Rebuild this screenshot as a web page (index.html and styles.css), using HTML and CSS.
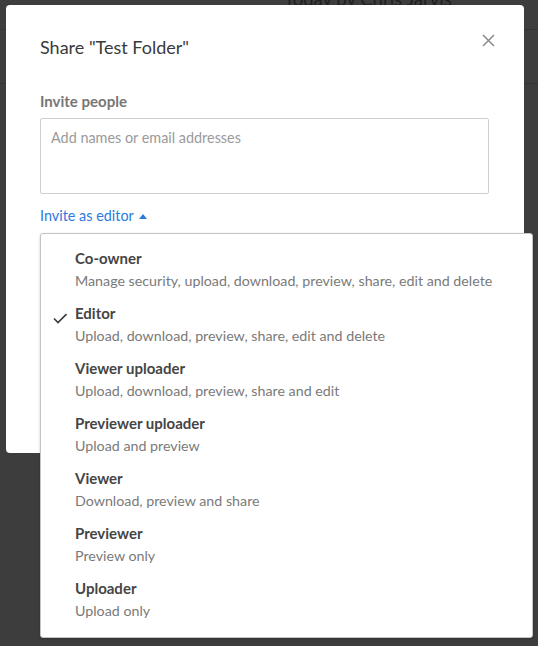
FILE: index.html
```html
<!DOCTYPE html>
<html>
<head>
<meta charset="utf-8">
<link rel="stylesheet" href="styles.css">
</head>
<body>
<div class="backdrop">
  <div class="bg-row bg-row-top"><span class="bg-text">Today by Chris Jarvis</span></div>
  <div class="bg-row bg-row-mid"></div>
</div>
<div class="modal">
  <div class="modal-head">
    <h1 class="modal-title">Share "Test Folder"</h1>
    <button class="close" aria-label="Close">
      <svg width="13" height="13" viewBox="0 0 13 13"><path d="M1 1 L12 12 M12 1 L1 12" stroke="#8a8a8a" stroke-width="1.5" fill="none"/></svg>
    </button>
  </div>
  <div class="label">Invite people</div>
  <div class="input">Add names or email addresses</div>
  <div class="invite-link">Invite as editor <svg class="caret" width="8" height="5" viewBox="0 0 8 5"><path d="M0 5 L4 0 L8 5 Z" fill="#2a7ae2"/></svg></div>
</div>
<div class="menu">
  <div class="item"><span class="check"></span><div class="text"><div class="name">Co-owner</div><div class="desc">Manage security, upload, download, preview, share, edit and delete</div></div></div>
  <div class="item"><span class="check"><svg width="14" height="12" viewBox="0 0 14 12"><path d="M1 6.5 L5 10.5 L13.5 2" stroke="#3a3a3a" stroke-width="1.6" fill="none"/></svg></span><div class="text"><div class="name">Editor</div><div class="desc">Upload, download, preview, share, edit and delete</div></div></div>
  <div class="item"><span class="check"></span><div class="text"><div class="name">Viewer uploader</div><div class="desc">Upload, download, preview, share and edit</div></div></div>
  <div class="item"><span class="check"></span><div class="text"><div class="name">Previewer uploader</div><div class="desc">Upload and preview</div></div></div>
  <div class="item"><span class="check"></span><div class="text"><div class="name">Viewer</div><div class="desc">Download, preview and share</div></div></div>
  <div class="item"><span class="check"></span><div class="text"><div class="name">Previewer</div><div class="desc">Preview only</div></div></div>
  <div class="item"><span class="check"></span><div class="text"><div class="name">Uploader</div><div class="desc">Upload only</div></div></div>
</div>
</body>
</html>
```
FILE: styles.css
```css
html, body {
  margin: 0;
  padding: 0;
}
body {
  width: 538px;
  height: 646px;
  overflow: hidden;
  background: #3d3d3d;
  font-family: Lato, "Open Sans", sans-serif;
  position: relative;
}
.backdrop {
  display: flex;
  flex-direction: column;
}
.bg-row {
  border-bottom: 1px solid #333333;
}
.bg-row-top {
  height: 29px;
  position: relative;
  overflow: hidden;
}
.bg-text {
  position: absolute;
  left: 284px;
  top: -12px;
  font-size: 18.5px;
  color: #202020;
}
.bg-row-mid {
  height: 53px;
}
.modal {
  position: absolute;
  left: 6px;
  top: 5px;
  width: 518px;
  height: 448px;
  box-sizing: border-box;
  background: #fff;
  border-radius: 4px;
  padding: 30px 29px 0 34px;
}
.modal-head {
  display: flex;
  justify-content: space-between;
  align-items: flex-start;
}
.modal-title {
  margin: 0;
  font-size: 18px;
  line-height: 24px;
  font-weight: 400;
  color: #3a3a3a;
}
.close {
  border: 0;
  background: none;
  padding: 0;
  margin-top: -1px;
  width: 13px;
  height: 13px;
  display: block;
}
.close svg { display: block; }
.label {
  margin-top: 32px;
  font-size: 15px;
  line-height: 20px;
  font-weight: 700;
  color: #767676;
}
.input {
  margin-top: 7px;
  width: 449px;
  height: 76px;
  box-sizing: border-box;
  border: 1px solid #cfcfcf;
  border-radius: 2px;
  padding: 9px 10px;
  font-size: 14.4px;
  line-height: 20px;
  color: #9a9a9a;
}
.invite-link {
  margin-top: 12px;
  font-size: 14.4px;
  line-height: 20px;
  color: #2a7ae2;
  display: flex;
  align-items: center;
  gap: 5px;
}
.caret { margin-top: 1px; }
.menu {
  position: absolute;
  left: 40px;
  top: 233px;
  width: 493px;
  height: 405px;
  box-sizing: border-box;
  background: #fff;
  border: 1px solid #c4c4c4;
  border-radius: 3px;
  box-shadow: 0 1px 3px rgba(0,0,0,0.2);
  padding: 8px 0 9px;
}
.item {
  display: flex;
  gap: 8px;
  padding: 6px 0 6px 12px;
}
.check {
  width: 14px;
  flex: none;
  padding-top: 26px;
}
.check svg { display: block; margin-top: -17px; }
.name {
  font-size: 15px;
  line-height: 20px;
  font-weight: 700;
  color: #454545;
}
.desc {
  margin-top: 3px;
  font-size: 14.25px;
  line-height: 20px;
  color: #7a7a7a;
}
```
